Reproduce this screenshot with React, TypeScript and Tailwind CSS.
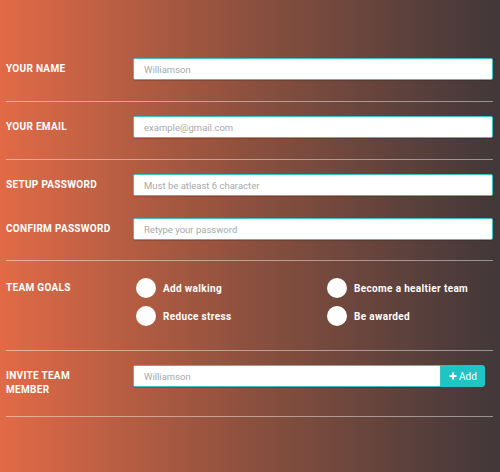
import React from "react";

const font = { fontFamily: "Roboto, 'Liberation Sans', sans-serif" };

function Label({ children }: { children: React.ReactNode }) {
  return (
    <div className="w-[127px] shrink-0 text-[10px] font-bold uppercase leading-[14px] tracking-[0.3px] text-white">
      {children}
    </div>
  );
}

function Input({ placeholder, className = "" }: { placeholder: string; className?: string }) {
  return (
    <input
      placeholder={placeholder}
      className={
        "h-[22px] min-w-0 flex-1 rounded-[2px] border border-[#3cc3c0] bg-white px-[10px] text-[9.5px] text-[#555] outline-none placeholder:text-[#a9a9a9] shadow-[0_1px_1px_rgba(0,0,0,0.15)] " +
        className
      }
    />
  );
}

function Goal({ text }: { text: string }) {
  return (
    <div className="flex items-center gap-[7px]">
      <div className="h-[20px] w-[20px] shrink-0 rounded-full bg-white" />
      <span className="text-[10px] font-bold tracking-[0.35px] text-white">{text}</span>
    </div>
  );
}

export default function App() {
  return (
    <div
      style={font}
      className="h-[472px] w-[500px] overflow-hidden bg-gradient-to-r from-[#e26a46] via-[#8c503e] to-[#413739] pl-[6px] pr-[7px]"
    >
      <div className="flex items-center border-b border-white/45 pt-[58px] pb-[21px]">
        <Label>Your Name</Label>
        <Input placeholder="Williamson" />
      </div>
      <div className="flex items-center border-b border-white/45 pt-[14px] pb-[21px]">
        <Label>Your Email</Label>
        <Input placeholder="example@gmail.com" />
      </div>
      <div className="flex flex-col gap-[22px] border-b border-white/45 pt-[14px] pb-[20px]">
        <div className="flex items-center">
          <Label>Setup Password</Label>
          <Input placeholder="Must be atleast 6 character" />
        </div>
        <div className="flex items-center">
          <Label>Confirm Password</Label>
          <Input placeholder="Retype your password" />
        </div>
      </div>
      <div className="flex border-b border-white/45 pt-[17px] pb-[24px]">
        <div className="mt-[3px]">
          <Label>Team Goals</Label>
        </div>
        <div className="grid flex-1 grid-cols-[191px_1fr] gap-y-[8px] pl-[3px]">
          <Goal text="Add walking" />
          <Goal text="Become a healtier team" />
          <Goal text="Reduce stress" />
          <Goal text="Be awarded" />
        </div>
      </div>
      <div className="flex border-b border-white/45 pt-[14px] pb-[19px]">
        <div className="mt-[4px]">
          <Label>
            Invite Team
            <br />
            Member
          </Label>
        </div>
        <div className="flex flex-1 items-start pr-[8px]">
          <Input placeholder="Williamson" className="rounded-r-none" />
          <button className="flex h-[22px] w-[44px] items-center justify-center gap-[2px] rounded-r-[3px] bg-[#1fc4c4] text-[10px] text-white">
            <svg width="8" height="8" viewBox="0 0 8 8">
              <path d="M4 0.5v7M0.5 4h7" stroke="white" strokeWidth="2" />
            </svg>
            Add
          </button>
        </div>
      </div>
    </div>
  );
}
